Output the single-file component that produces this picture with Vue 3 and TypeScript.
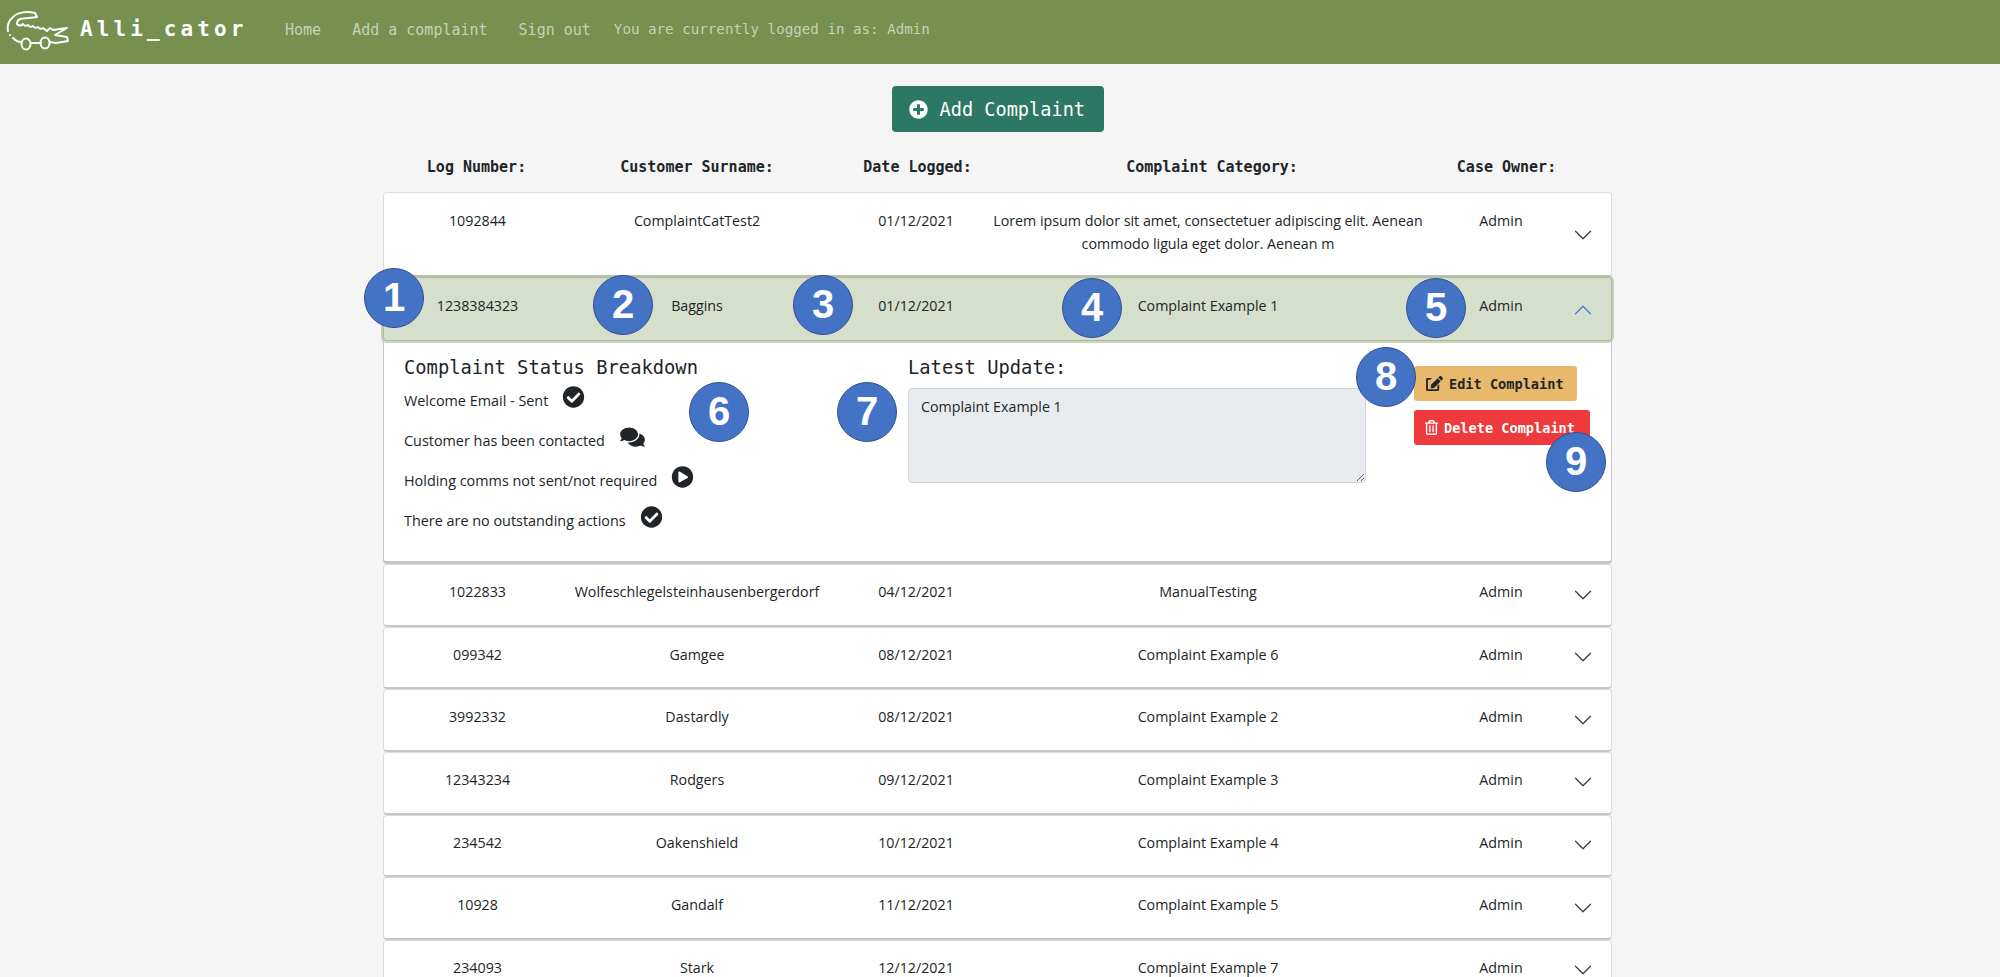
<script setup lang="ts">
interface Row { log: string; name: string; date: string; cat: string; open?: boolean }
const before: Row = { log: '1092844', name: 'ComplaintCatTest2', date: '01/12/2021', cat: 'Lorem ipsum dolor sit amet, consectetuer adipiscing elit. Aenean commodo ligula eget dolor. Aenean m' }
const rows: Row[] = [
  { log: '1022833', name: 'Wolfeschlegelsteinhausenbergerdorf', date: '04/12/2021', cat: 'ManualTesting' },
  { log: '099342', name: 'Gamgee', date: '08/12/2021', cat: 'Complaint Example 6' },
  { log: '3992332', name: 'Dastardly', date: '08/12/2021', cat: 'Complaint Example 2' },
  { log: '12343234', name: 'Rodgers', date: '09/12/2021', cat: 'Complaint Example 3' },
  { log: '234542', name: 'Oakenshield', date: '10/12/2021', cat: 'Complaint Example 4' },
  { log: '10928', name: 'Gandalf', date: '11/12/2021', cat: 'Complaint Example 5' },
  { log: '234093', name: 'Stark', date: '12/12/2021', cat: 'Complaint Example 7' },
]
const chevron = 'M1.646 4.646a.5.5 0 0 1 .708 0L8 10.293l5.646-5.647a.5.5 0 0 1 .708.708l-6 6a.5.5 0 0 1-.708 0l-6-6a.5.5 0 0 1 0-.708z'
const check = 'M504 256c0 136.967-111.033 248-248 248S8 392.967 8 256 119.033 8 256 8s248 111.033 248 248zM227.314 387.314l184-184c6.248-6.248 6.248-16.379 0-22.627l-22.627-22.627c-6.248-6.249-16.379-6.249-22.628 0L216 308.118l-70.059-70.059c-6.248-6.248-16.379-6.248-22.628 0l-22.627 22.627c-6.248 6.248-6.248 16.379 0 22.627l104 104c6.249 6.249 16.379 6.249 22.628.001z'
const play = 'M256 8C119 8 8 119 8 256s111 248 248 248 248-111 248-248S393 8 256 8zm115.7 272l-176 101c-15.8 8.8-35.7-2.5-35.7-21V152c0-18.4 19.8-29.8 35.7-21l176 107c16.4 9.2 16.4 32.900 0 42z'
const plus = 'M256 8C119 8 8 119 8 256s111 248 248 248 248-111 248-248S393 8 256 8zm144 276c0 6.6-5.400 12-12 12h-92v92c0 6.6-5.400 12-12 12h-56c-6.600 0-12-5.400-12-12v-92h-92c-6.600 0-12-5.400-12-12v-56c0-6.600 5.400-12 12-12h92v-92c0-6.600 5.400-12 12-12h56c6.600 0 12 5.400 12 12v92h92c6.600 0 12 5.400 12 12v56z'
const comments = 'M416 192c0-88.4-93.1-160-208-160S0 103.6 0 192c0 34.3 14.1 65.9 38 92-13.4 30.2-35.5 54.2-35.8 54.5-2.2 2.300-2.8 5.700-1.500 8.700S4.800 352 8 352c36.600 0 66.900-12.300 88.700-25 32.200 15.700 70.300 25 111.300 25 114.900 0 208-71.600 208-160zm122 220c23.900-26 38-57.700 38-92 0-66.900-53.500-124.200-129.300-148.100.9 6.600 1.300 13.300 1.300 20.100 0 105.900-107.700 192-240 192-10.800 0-21.300-.8-31.700-1.900C207.800 439.600 281.800 480 368 480c41 0 79.100-9.200 111.300-25 21.800 12.700 52.100 25 88.700 25 3.200 0 6.100-1.900 7.300-4.800 1.300-2.900.7-6.300-1.500-8.700-.3-.3-22.400-24.200-35.800-54.500z'
const edit = 'M402.6 83.200l90.200 90.200c3.800 3.800 3.800 10 0 13.800L274.400 405.600l-92.800 10.300c-12.400 1.400-22.900-9.100-21.500-21.500l10.300-92.800L388.800 83.200c3.800-3.800 10-3.800 13.800 0zm162-22.900l-48.800-48.800c-15.200-15.200-39.900-15.200-55.200 0l-35.400 35.400c-3.800 3.800-3.800 10 0 13.800l90.200 90.200c3.800 3.800 10 3.800 13.800 0l35.400-35.400c15.200-15.300 15.200-40 0-55.200zM384 346.200V448H64V128h73.100c3.200 0 6.200-1.300 8.500-3.500l40-40c7.600-7.600 2.200-20.500-8.500-20.500H48C21.500 64 0 85.500 0 112v352c0 26.500 21.500 48 48 48h352c26.500 0 48-21.500 48-48V306.200c0-10.700-12.900-16-20.500-8.500l-40 40c-2.200 2.300-3.500 5.300-3.500 8.500z'
const trash = 'M268 416h24a12 12 0 0 0 12-12V188a12 12 0 0 0-12-12h-24a12 12 0 0 0-12 12v216a12 12 0 0 0 12 12zM432 80h-82.410l-34-56.700A48 48 0 0 0 274.410 0H173.590a48 48 0 0 0-41.160 23.300L98.410 80H16A16 16 0 0 0 0 96v16a16 16 0 0 0 16 16h16v336a48 48 0 0 0 48 48h288a48 48 0 0 0 48-48V128h16a16 16 0 0 0 16-16V96a16 16 0 0 0-16-16zM171.840 50.910A6 6 0 0 1 177 48h94a6 6 0 0 1 5.150 2.910L293.610 80H154.390zM368 464H80V128h288zm-212-48h24a12 12 0 0 0 12-12V188a12 12 0 0 0-12-12h-24a12 12 0 0 0-12 12v216a12 12 0 0 0 12 12z'
const statuses = [
  { text: 'Welcome Email - Sent', d: check, vb: '0 0 512 512', w: 23 },
  { text: 'Customer has been contacted', d: comments, vb: '0 0 576 512', w: 27 },
  { text: 'Holding comms not sent/not required', d: play, vb: '0 0 512 512', w: 23 },
  { text: 'There are no outstanding actions', d: check, vb: '0 0 512 512', w: 23 },
]
const markers = [
  { n: 1, x: 394, y: 298 }, { n: 2, x: 623, y: 305 }, { n: 3, x: 823, y: 305 },
  { n: 4, x: 1092, y: 308 }, { n: 5, x: 1436, y: 308 }, { n: 6, x: 719, y: 412 },
  { n: 7, x: 867, y: 412 }, { n: 8, x: 1386, y: 377 }, { n: 9, x: 1576, y: 462 },
]
</script>

<template>
  <div class="page">
    <nav class="navbar">
      <svg class="logo" width="80" height="64" viewBox="0 0 80 64" fill="none" stroke="#fff" stroke-width="2" stroke-linecap="round" stroke-linejoin="round">
        <path d="M35 13C27 11 18 12 13 17C8 21 7 27 8 31" />
        <path d="M10 35L10 35.1M13 38C15 40 17 42 21 42" />
        <path d="M35 13L37 17C30 18 24 18 20 19C18 20 17 22 17 24Q20 27 23 24Q25 27 28 25Q30 28 33 26Q35 29 38 27Q40 30 43 28L47 31L50 28L53 30L67 28L55 35L67 37L68 41L56 43L50 42" />
        <ellipse cx="26" cy="44" rx="4.5" ry="5.5" />
        <ellipse cx="45" cy="43" rx="4.5" ry="5.5" />
        <path d="M31 43L41 43" />
      </svg>
      <span class="brand">Alli_cator</span>
      <a class="link home">Home</a>
      <a class="link">Add a complaint</a>
      <a class="link">Sign out</a>
      <span class="link user">You are currently logged in as: Admin</span>
    </nav>

    <main class="main">
      <button class="add-btn" type="button">
        <svg width="19" height="19" viewBox="0 0 512 512"><path fill="#fff" :d="plus" /></svg>
        Add Complaint
      </button>

      <div class="grid head">
        <div>Log Number:</div>
        <div>Customer Surname:</div>
        <div>Date Logged:</div>
        <div>Complaint Category:</div>
        <div>Case Owner:</div>
      </div>

      <div class="list">
        <div class="grid row first">
          <div>{{ before.log }}</div>
          <div>{{ before.name }}</div>
          <div>{{ before.date }}</div>
          <div>{{ before.cat }}</div>
          <div>Admin</div>
          <svg class="chev" width="20" height="20" viewBox="0 0 16 16"><path fill="#3c3f42" :d="chevron" /></svg>
        </div>

        <div class="grid row selected">
          <div>1238384323</div>
          <div>Baggins</div>
          <div>01/12/2021</div>
          <div>Complaint Example 1</div>
          <div>Admin</div>
          <svg class="chev up" width="20" height="20" viewBox="0 0 16 16"><path fill="#3f7fdc" :d="chevron" /></svg>
        </div>

        <div class="detail">
          <div>
            <h5 class="title">Complaint Status Breakdown</h5>
            <div v-for="s in statuses" :key="s.text" class="status">
              <span>{{ s.text }}</span>
              <svg :width="s.w" height="22" :viewBox="s.vb"><path fill="#212529" :d="s.d" /></svg>
            </div>
          </div>
          <div>
            <h5 class="title">Latest Update:</h5>
            <textarea class="update" disabled>Complaint Example 1</textarea>
          </div>
          <div class="actions">
            <button class="act edit" type="button">
              <svg width="17" height="15" viewBox="0 0 576 512"><path fill="#212529" :d="edit" /></svg>
              Edit Complaint
            </button>
            <button class="act del" type="button">
              <svg width="13" height="15" viewBox="0 0 448 512"><path fill="#fff" :d="trash" /></svg>
              Delete Complaint
            </button>
          </div>
        </div>

        <div v-for="r in rows" :key="r.log" class="grid row">
          <div>{{ r.log }}</div>
          <div>{{ r.name }}</div>
          <div>{{ r.date }}</div>
          <div>{{ r.cat }}</div>
          <div>Admin</div>
          <svg class="chev" width="20" height="20" viewBox="0 0 16 16"><path fill="#3c3f42" :d="chevron" /></svg>
        </div>
      </div>
    </main>

    <div
      v-for="m in markers"
      :key="m.n"
      class="marker"
      :style="{ left: m.x - 30 + 'px', top: m.y - 30 + 'px' }"
    >{{ m.n }}</div>
  </div>
</template>

<style>
html, body { overflow: hidden; background: #f5f5f5; }
</style>

<style scoped>
.page {
  position: relative;
  height: 977px;
  overflow: hidden;
  background: #f5f5f5;
  color: #212529;
  font-family: "Open Sans", "Noto Sans", sans-serif;
  font-size: 14.25px;
}
.navbar {
  display: flex;
  align-items: center;
  height: 64px;
  background: #76904f;
  font-family: "DejaVu Sans Mono", monospace;
}
.logo { flex: none; }
.brand {
  color: #fff;
  font-size: 21px;
  font-weight: 700;
  letter-spacing: 4.1px;
  width: 205px;
  margin-top: -7px;
}
.link {
  color: #c8d1b9;
  font-size: 15px;
  margin-right: 31px;
  margin-top: -5px;
}
.link.user { margin-left: -8px; margin-top: -7px; margin-right: 0; font-size: 14.2px; }
.main {
  width: 1229px;
  margin-left: 383px;
  display: flex;
  flex-direction: column;
}
.add-btn {
  align-self: center;
  display: flex;
  align-items: center;
  gap: 12px;
  margin-top: 22px;
  height: 46px;
  width: 212px;
  padding: 0 0 0 17px;
  border: none;
  border-radius: 4px;
  background: #2d7864;
  color: #fff;
  font-family: "DejaVu Sans Mono", monospace;
  font-size: 18.6px;
}
.grid {
  display: grid;
  grid-template-columns: 141px 298px 140px 444px 142px 22px;
  padding-left: 23px;
  text-align: center;
  box-sizing: border-box;
}
.head {
  grid-template-columns: 141px 300px 141px 448px 141px;
  margin-top: 25px;
  height: 35px;
  font-family: "DejaVu Sans Mono", monospace;
  font-size: 15px;
  font-weight: 700;
  line-height: 20px;
}
.list { display: flex; flex-direction: column; }
.row {
  background: #fff;
  border: 1px solid #dcdcdc;
  border-bottom: 2px solid #c6c6c6;
  border-radius: 4px;
  padding-top: 15px;
  padding-bottom: 21.67px;
  line-height: 23px;
}
.row.first { padding-top: 16px; padding-bottom: 20px; border-bottom-color: #dcdcdc; }
.chev { justify-self: end; align-self: center; margin-right: 1px; transform: translateY(3px); }
.chev.up { transform: translateY(4px) rotate(180deg); }
.selected {
  position: relative;
  background: #d6dfcb;
  border: 1px solid #aebb9b;
  box-shadow: 0 0 0 2px rgba(140, 160, 110, .45);
  padding-top: 16px;
  padding-bottom: 23px;
}
.detail {
  display: grid;
  grid-template-columns: 504px 505px 1fr;
  box-sizing: border-box;
  height: 223px;
  padding: 16px 0 0 20px;
  background: #fff;
  border: 1px solid #c8c8c8;
  border-top: none;
  border-bottom: 3px solid #c6c6c6;
  border-radius: 0 0 4px 4px;
}
.title {
  margin: 0 0 10px;
  font-family: "DejaVu Sans Mono", monospace;
  font-size: 18.8px;
  font-weight: 400;
  line-height: 22px;
}
.status {
  display: flex;
  align-items: flex-start;
  gap: 14px;
  height: 40px;
  line-height: 24px;
  font-size: 14.4px;
}
.status svg { margin-top: -3px; }
.update {
  display: block;
  box-sizing: border-box;
  width: 458px;
  height: 95px;
  margin-top: -1px;
  padding: 6px 12px;
  border: 1px solid #ced4da;
  border-radius: 4px;
  background: #e9ecef;
  color: #212529;
  font: inherit;
  line-height: 24px;
}
.actions {
  display: flex;
  flex-direction: column;
  align-items: flex-start;
  gap: 9px;
  padding-top: 9px;
  margin-left: 1px;
}
.act {
  display: flex;
  align-items: center;
  gap: 6px;
  height: 35px;
  border: none;
  border-radius: 3px;
  font-family: "DejaVu Sans Mono", monospace;
  font-size: 13.6px;
  font-weight: 700;
}
.edit { width: 163px; padding: 0 0 0 12px; background: #e8b96a; color: #212529; }
.del { width: 176px; padding: 0 0 0 11px; background: #ee3a3c; color: #fff; }
.marker {
  position: absolute;
  box-sizing: border-box;
  width: 60px;
  height: 60px;
  border-radius: 50%;
  border: 1.5px solid #2f528f;
  background: #4472c4;
  color: #fff;
  font-family: "Liberation Sans", Arial, sans-serif;
  font-size: 40px;
  font-weight: 700;
  line-height: 57px;
  text-align: center;
}
</style>
